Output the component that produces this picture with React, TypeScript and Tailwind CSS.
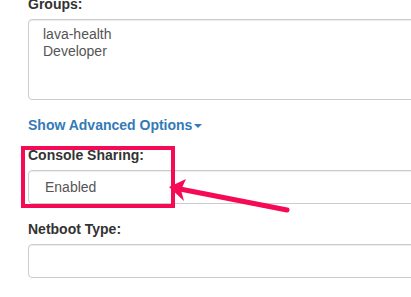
import React from 'react';

const Caret: React.FC = () => (
  <span className="ml-[2px] inline-block h-0 w-0 border-x-[4px] border-t-[4px] border-x-transparent border-t-[#337ab7] align-middle" />
);

const App: React.FC = () => {
  return (
    <div
      className="relative h-[297px] w-[411px] overflow-hidden bg-white text-[14px] text-[#333]"
      style={{ fontFamily: '"Liberation Sans", Arial, sans-serif' }}
    >
      <div className="w-[460px] pl-[28px] pt-0">
        {/* Groups */}
        <div className="-mt-[6px] mb-[15px]">
          <div className="mb-[5px] font-bold leading-[20px]">Groups:</div>
          <div className="h-[81px] rounded-[4px] border border-[#ccc] px-[14px] py-[6px] leading-[17px] text-[#555] shadow-[inset_0_1px_1px_rgba(0,0,0,0.075)]">
            <div>lava-health</div>
            <div>Developer</div>
          </div>
        </div>

        {/* Advanced toggle */}
        <div className="mb-[10px] leading-[20px]">
          <a className="font-bold text-[#337ab7]">
            Show Advanced Options
            <Caret />
          </a>
        </div>

        {/* Console Sharing */}
        <div className="mb-[15px]">
          <div className="mb-[5px] font-bold leading-[20px]">Console Sharing:</div>
          <div className="flex h-[34px] items-center rounded-[4px] border border-[#ccc] px-[16px] text-[#555] shadow-[inset_0_1px_1px_rgba(0,0,0,0.075)]">
            Enabled
          </div>
        </div>

        {/* Netboot Type */}
        <div className="mb-[15px]">
          <div className="mb-[5px] font-bold leading-[20px]">Netboot Type:</div>
          <div className="h-[34px] rounded-[4px] border border-[#ccc] shadow-[inset_0_1px_1px_rgba(0,0,0,0.075)]" />
        </div>

        {/* Serial consoles (cut off) */}
        <div className="mb-[5px] font-bold leading-[20px]">Number of Serial Consoles:</div>
      </div>

      {/* annotation: highlight box */}
      <div className="absolute left-[21px] top-[146px] h-[62px] w-[154px] border-[4px] border-[#f50a55]" />

      {/* annotation: arrow */}
      <svg className="absolute left-0 top-0" width="411" height="297" viewBox="0 0 411 297">
        <line x1="287" y1="210" x2="180" y2="189" stroke="#f50a55" strokeWidth="5" strokeLinecap="round" />
        <polygon points="169,187 186,179 181,190 184,201" fill="#f50a55" />
      </svg>
    </div>
  );
};

export default App;
